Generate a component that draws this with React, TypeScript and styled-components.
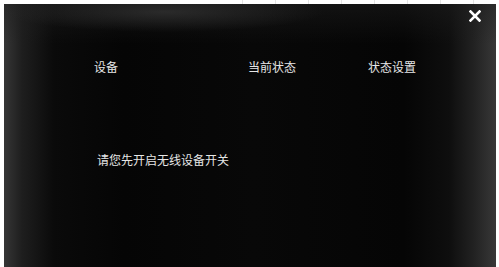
import React from "react";
import styled, { createGlobalStyle } from "styled-components";

const Global = createGlobalStyle`
  html, body { margin: 0; padding: 0; background: #ffffff; }
  body { width: 499px; height: 267px; overflow: hidden; font-family: "Noto Sans CJK SC", "Noto Sans", sans-serif; }
`;

const Page = styled.div`
  width: 499px;
  height: 267px;
  display: flex;
  flex-direction: column;
  background: #ffffff;
`;

const TopStrip = styled.div`
  height: 4px;
  flex: none;
  background:
    repeating-linear-gradient(90deg, transparent 0 32px, #e4e4e4 32px 33px) 210px 0 / 289px 4px no-repeat,
    #ffffff;
`;

const Panel = styled.div`
  position: relative;
  margin-left: 4px;
  width: 492px;
  flex: 1;
  padding: 57px 0 0 90px;
  box-sizing: border-box;
  color: #e6e6e6;
  font-size: 12px;
  line-height: 12px;
  background:
    radial-gradient(ellipse 160px 20px at 160px 8px, rgba(60,60,60,0.6), rgba(0,0,0,0)),
    linear-gradient(180deg, rgba(30,30,30,0.5) 0px, rgba(0,0,0,0) 40px),
    linear-gradient(90deg, #363636 0px, #1e1e1e 18px, #0a0a0a 50px, #050505 120px, #080808 250px, #050505 400px, #0e0e0e 445px, #222 470px, #383838 492px);
`;

const Close = styled.div`
  position: absolute;
  top: 6px;
  right: 15px;
  width: 12px;
  height: 12px;
`;

const HeaderRow = styled.div`
  display: grid;
  grid-template-columns: 154px 120px auto;
`;

const HeaderCell = styled.div`
  white-space: nowrap;
`;

const Message = styled.div`
  margin-top: 81px;
  padding-left: 3px;
  white-space: nowrap;
`;

export default function App() {
  return (
    <Page>
      <Global />
      <TopStrip />
      <Panel>
        <Close>
          <svg width="12" height="12" viewBox="0 0 12 12">
            <path d="M1.5 1.5 L10.5 10.5 M10.5 1.5 L1.5 10.5" stroke="#ffffff" strokeWidth="2.6" strokeLinecap="square" />
          </svg>
        </Close>
        <HeaderRow>
          <HeaderCell>设备</HeaderCell>
          <HeaderCell>当前状态</HeaderCell>
          <HeaderCell>状态设置</HeaderCell>
        </HeaderRow>
        <Message>请您先开启无线设备开关</Message>
      </Panel>
    </Page>
  );
}
